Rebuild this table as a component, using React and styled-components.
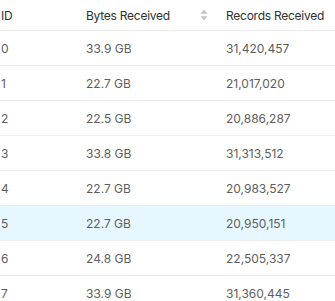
import styled, { createGlobalStyle } from "styled-components";

const Global = createGlobalStyle`
	body{
		margin:0;
		background:#fff;
		font-family:Inter, "Liberation Sans", sans-serif;
	}
`;

const Table = styled.div`
	width:335px;
	height:301px;
	overflow:hidden;
	font-size:12px;
`;

const Row = styled.div`
	display:grid;
	grid-template-columns:85px 140px 1fr;
	align-items:center;
	height:${p => p.$head ? "30px" : "34px"};
	border-bottom:1px solid #ececec;
	background:${p => p.$active ? "#e6f7ff" : "#fff"};
	color:${p => p.$head ? "#2f2f2f" : "#5e5e5e"};
	letter-spacing:${p => p.$head ? "-0.25px" : "0"};
`;

const Cell = styled.div`
	padding-left:1px;
	white-space:nowrap;
`;

const SortCell = styled.div`
	display:flex;
	align-items:center;
	justify-content:space-between;
	padding-left:1px;
	padding-right:17px;
`;

function SortIcon()
{
	return(
		<svg width="8" height="14" viewBox="0 0 8 14">
			<path d="M4 1.5 L7.5 5.8 L0.5 5.8 Z" fill="#c4c4c4"/>
			<path d="M4 12.5 L7.5 8.2 L0.5 8.2 Z" fill="#c4c4c4"/>
		</svg>
	);
}

const rows=[
	["0","33.9 GB","31,420,457"],
	["1","22.7 GB","21,017,020"],
	["2","22.5 GB","20,886,287"],
	["3","33.8 GB","31,313,512"],
	["4","22.7 GB","20,983,527"],
	["5","22.7 GB","20,950,151"],
	["6","24.8 GB","22,505,337"],
	["7","33.9 GB","31,360,445"],
];

export default function App()
{
	return(<>
		<Global/>
		<Table>
			<Row $head>
				<Cell>ID</Cell>
				<SortCell>Bytes Received <SortIcon/></SortCell>
				<Cell>Records Received</Cell>
			</Row>
			{rows.map(r=>(
				<Row key={r[0]} $active={r[0]==="5"}>
					<Cell>{r[0]}</Cell>
					<Cell>{r[1]}</Cell>
					<Cell>{r[2]}</Cell>
				</Row>
			))}
		</Table>
	</>);
}
